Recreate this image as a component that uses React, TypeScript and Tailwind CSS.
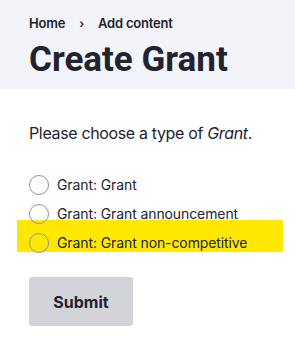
import React from "react";

function Radio({ label }: { label: string }) {
  return (
    <label className="relative flex items-center h-[29px] gap-[8px]">
      <span className="block w-[20px] h-[20px] rounded-full border border-[#8e929c] bg-transparent shrink-0" />
      <span className="text-[14px] text-[#222330] leading-none tracking-[-0.1px]">{label}</span>
    </label>
  );
}

export default function App() {
  return (
    <div className="w-[295px] h-[343px] bg-white text-[#222330] overflow-hidden" style={{ fontFamily: "Inter, 'Noto Sans', sans-serif" }}>
      <div className="bg-[#f3f4f9] h-[89px] px-[29px] pt-[16px]">
        <nav className="flex items-center text-[13px] font-semibold h-[16px] tracking-[-0.2px]">
          <span>Home</span>
          <span className="mx-[14px] text-[12px]">›</span>
          <span>Add content</span>
        </nav>
        <h1 className="mt-[8px] text-[35px] font-bold leading-[40px] tracking-[0px]" style={{ fontFamily: "Roboto, Inter, sans-serif" }}>Create Grant</h1>
      </div>
      <div className="px-[29px] pt-[33px]">
        <p className="text-[16px] leading-[22px] tracking-[-0.35px]">
          Please choose a type of <em>Grant</em>.
        </p>
        <div className="relative mt-[26px] flex flex-col">
          <div className="absolute left-[-12px] w-[266px] top-[50px] h-[32px] bg-[#ffe800]" />
          <Radio label="Grant: Grant" />
          <Radio label="Grant: Grant announcement" />
          <Radio label="Grant: Grant non-competitive" />
        </div>
        <button className="mt-[20px] w-[104px] h-[49px] rounded-[3px] bg-[#d3d4d9] text-[16px] font-bold text-[#222330]">
          Submit
        </button>
      </div>
    </div>
  );
}
